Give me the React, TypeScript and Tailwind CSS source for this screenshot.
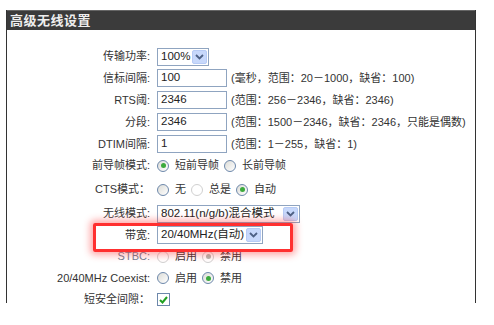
import React from 'react';

const font = { fontFamily: '"Liberation Sans", "Noto Sans CJK SC", sans-serif' };

function Chevron() {
  return (
    <svg width="9" height="6" viewBox="0 0 9 6">
      <path d="M1 1l3.5 3.5L8 1" fill="none" stroke="#4d6185" strokeWidth="1.8" />
    </svg>
  );
}

function Select({ value, width }: { value: string; width: string }) {
  return (
    <div className={`flex h-[18px] shrink-0 items-center justify-between border border-[#8fa4c0] bg-white pl-[3px] pr-[1px] ${width}`}>
      <span className="whitespace-nowrap text-[11.5px] leading-none text-[#222]">{value}</span>
      <span className="flex h-[14px] w-[15px] items-center justify-center rounded-[2px] border border-[#b7cbf5] bg-[#c7d8fb]">
        <Chevron />
      </span>
    </div>
  );
}

function Input({ value }: { value: string }) {
  return (
    <div className="flex h-[18px] w-[70px] shrink-0 items-center border border-[#8fa4c0] bg-white px-[3px] text-[11.5px] leading-none text-[#222]">
      {value}
    </div>
  );
}

function Radio({ checked = false, disabled = false }: { checked?: boolean; disabled?: boolean }) {
  return (
    <span
      className={`mr-[6px] flex h-[12px] w-[12px] shrink-0 items-center justify-center rounded-full border bg-gradient-to-br ${
        disabled ? 'border-[#d0d0d0] from-white to-white' : 'border-[#6d88ab] from-[#dcdcd7] to-white'
      }`}
    >
      {checked && (
        <span className={`h-[5px] w-[5px] rounded-full ${disabled ? 'bg-[#b0b8b0]' : 'bg-[#3caa3c]'}`} />
      )}
    </span>
  );
}

function Option({ label, checked, disabled }: { label: string; checked?: boolean; disabled?: boolean }) {
  return (
    <span className="mr-[5px] flex items-center">
      <Radio checked={checked} disabled={disabled} />
      <span className="text-[11px] text-[#333]">{label}</span>
    </span>
  );
}

function Row({ label, h, children, dim }: { label: string; h: string; children: React.ReactNode; dim?: boolean }) {
  return (
    <div className={`flex items-center ${h}`}>
      <div className={`w-[143px] shrink-0 whitespace-nowrap text-right text-[11px] ${dim ? 'text-[#6f7f95]' : 'text-[#333]'}`}>
        {label}
      </div>
      <div className="ml-[7px] flex items-center">{children}</div>
    </div>
  );
}

function Hint({ text }: { text: string }) {
  return <span className="ml-[4px] whitespace-nowrap text-[11px] text-[#333]">{text}</span>;
}

export default function App() {
  return (
    <div className="relative h-[325px] w-[494px] overflow-hidden bg-white pl-[6px] pt-[10px]" style={font}>
      <div className="h-[293px] w-[470px] border-x border-[#333]">
        <div className="flex h-[20px] items-center border-t border-[#666] bg-[#3b3b3b] pl-[3px]">
          <span className="text-[13px] font-bold tracking-[0.5px] text-[#eeeeee]">高级无线设置</span>
        </div>
        <div className="pt-[16px]">
          <Row label="传输功率:" h="h-[21px]">
            <Select value="100%" width="w-[52px]" />
          </Row>
          <Row label="信标间隔:" h="h-[22px]">
            <Input value="100" />
            <Hint text="(毫秒，范围：20－1000，缺省：100)" />
          </Row>
          <Row label="RTS阈:" h="h-[22px]">
            <Input value="2346" />
            <Hint text="(范围：256－2346，缺省：2346)" />
          </Row>
          <Row label="分段:" h="h-[22px]">
            <Input value="2346" />
            <Hint text="(范围：1500－2346，缺省：2346，只能是偶数)" />
          </Row>
          <Row label="DTIM间隔:" h="h-[22px]">
            <Input value="1" />
            <Hint text="(范围：1－255，缺省：1)" />
          </Row>
          <Row label="前导帧模式:" h="h-[21px]">
            <Option label="短前导帧" checked />
            <Option label="长前导帧" />
          </Row>
          <Row label="CTS模式：" h="h-[27px]">
            <Option label="无" />
            <Option label="总是" disabled />
            <Option label="自动" checked />
          </Row>
          <Row label="无线模式:" h="h-[21px]">
            <Select value="802.11(n/g/b)混合模式" width="w-[143px]" />
          </Row>
          <Row label="带宽:" h="h-[22px]">
            <Select value="20/40MHz(自动)" width="w-[106px]" />
          </Row>
          <Row label="STBC:" h="h-[21px]" dim>
            <Option label="启用" disabled />
            <Option label="禁用" checked disabled />
          </Row>
          <Row label="20/40MHz Coexist:" h="h-[22px]">
            <Option label="启用" />
            <Option label="禁用" checked />
          </Row>
          <Row label="短安全间隙：" h="h-[21px]">
            <span className="flex h-[13px] w-[13px] items-center justify-center border border-[#6d88ab] bg-white">
              <svg width="9" height="8" viewBox="0 0 9 8">
                <path d="M1 4l2.5 2.5L8 1" fill="none" stroke="#21a121" strokeWidth="2" />
              </svg>
            </span>
          </Row>
        </div>
      </div>
      <div className="absolute left-[93px] top-[223px] h-[29px] w-[200px] rounded-[2px] border-[3px] border-[#ff3030] shadow-[0_0_7px_3px_rgba(255,40,40,0.4)]" />
    </div>
  );
}
